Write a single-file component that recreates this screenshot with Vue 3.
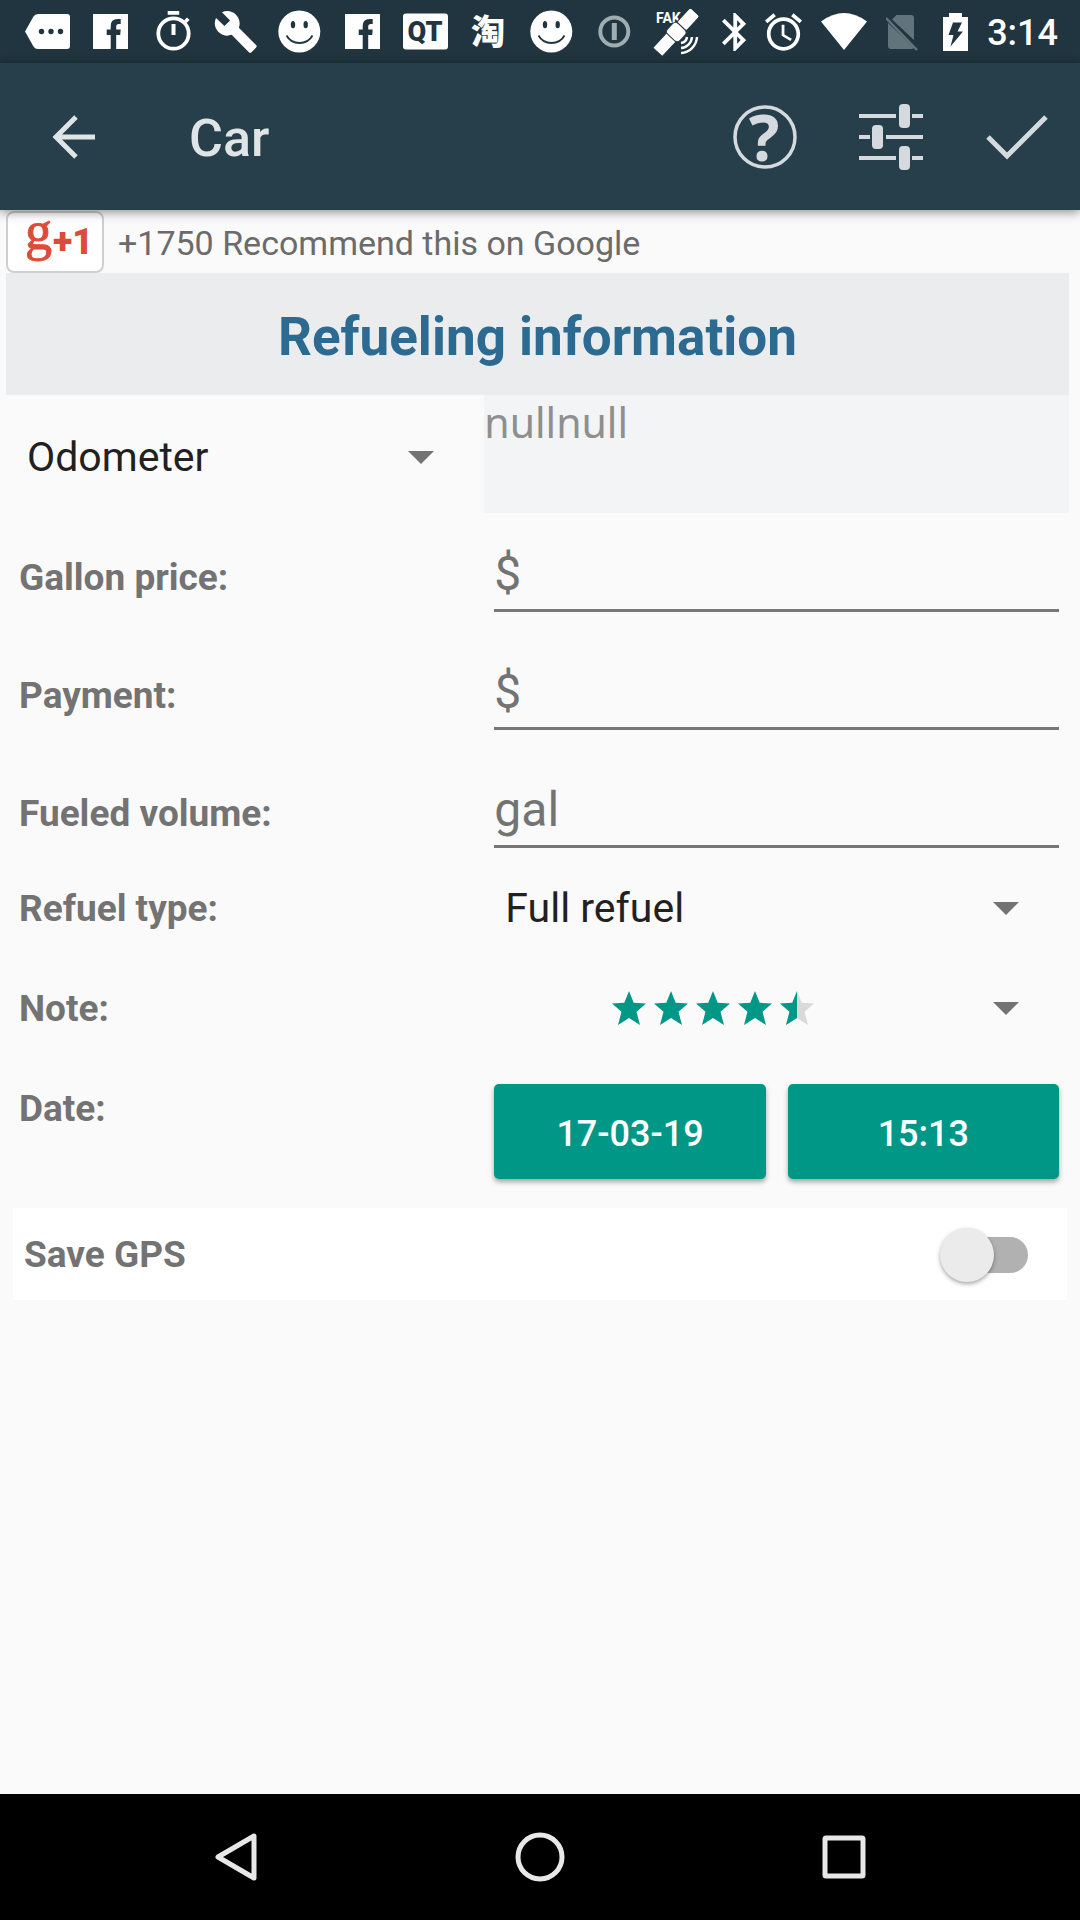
<script setup>
import { ref } from 'vue'

const notices = ['more', 'facebook', 'timer', 'wrench', 'smile', 'facebook', 'qt', 'tao', 'smile', 'info', 'satellite']

const fields = [
  { id: 'price', label: 'Gallon price:', hint: '$' },
  { id: 'payment', label: 'Payment:', hint: '$' },
  { id: 'volume', label: 'Fueled volume:', hint: 'gal' }
]

const values = ref({ price: '', payment: '', volume: '' })
const counter = ref('nullnull')
const counterType = ref('Odometer')
const refuelType = ref('Full refuel')
const saveGps = ref(false)
</script>

<template>
  <div class="screen">
    <div class="status">
      <div class="notices">
        <svg v-for="(kind, i) in notices" :key="i" class="notice" viewBox="0 0 63 63" aria-hidden="true">
          <g v-if="kind === 'more'">
            <path fill="#fff" d="M9 31.500 L17.500 16.500 Q19 14 22 14 H51 q3 0 3 3 V46 q0 3 -3 3 H22 q-3 0 -4.500 -2.500 Z" />
            <g class="ink"><circle cx="25.500" cy="31.500" r="2.700" /><circle cx="35" cy="31.500" r="2.700" /><circle cx="44.500" cy="31.500" r="2.700" /></g>
          </g>
          <g v-else-if="kind === 'facebook'">
            <path fill="#fff" d="M14 14h35v35H14z" />
            <path class="ink" d="M31.700 49V35h-4v-5.500h4v-3.500q0-7 7-7h3v5h-2q-2.500 0-2.500 2.500v3h4.500l-.5 5.500h-4v14z" />
          </g>
          <g v-else-if="kind === 'timer'">
            <circle cx="31.500" cy="33.500" r="15.200" fill="none" stroke="#fff" stroke-width="3.800" />
            <path fill="#fff" d="M25.700 11h11.500v3.800H25.700zM29.500 24h4v11h-4zM42 20.500l3-3 2.600 2.600-3 3z" />
          </g>
          <path v-else-if="kind === 'wrench'" fill="#fff" transform="translate(8 9) scale(1.9)" d="M22.700 19l-9.100-9.100c.9-2.300.4-5-1.500-6.900-2-2-5-2.400-7.400-1.300L9 6 6 9 1.600 4.700C.4 7.100.9 10.100 2.900 12.100c1.900 1.900 4.600 2.400 6.900 1.500l9.100 9.100c.4.4 1 .4 1.400 0l2.300-2.300c.5-.4.5-1.100.1-1.400z" />
          <g v-else-if="kind === 'smile'">
            <circle cx="31.300" cy="31.500" r="21" fill="#fff" />
            <g class="ink"><ellipse cx="25" cy="24.700" rx="2.200" ry="3.600" /><ellipse cx="37.700" cy="24.700" rx="2.200" ry="3.600" /></g>
            <path class="ink-line" d="M18.500 35.500 C24 45.500 39 45.500 44.500 35.500" stroke-width="1.800" />
          </g>
          <g v-else-if="kind === 'qt'">
            <rect x="9" y="13.500" width="45" height="36" rx="3" fill="#fff" />
            <text class="ink qt" x="31" y="41" text-anchor="middle">QT</text>
          </g>
          <text v-else-if="kind === 'tao'" class="tao" x="14" y="44">淘</text>
          <g v-else-if="kind === 'info'">
            <circle cx="31.300" cy="31.500" r="14" fill="none" stroke="#9facb2" stroke-width="4" />
            <path fill="#9facb2" d="M28.800 23h5v17h-5z" />
          </g>
          <g v-else>
            <text class="fake" x="10" y="23">FAK</text>
            <g transform="translate(31 32) rotate(-47)" fill="#fff" class="edge">
              <rect x="-28" y="-7" width="21" height="13" />
              <rect x="7" y="-7" width="20" height="13" rx="2" />
              <rect x="-8" y="-9" width="15" height="17" rx="4" />
            </g>
            <g fill="none" stroke="#fff" stroke-width="2.500">
              <path d="M41 37 A7 7 0 0 1 35 43M46 37 A12 12 0 0 1 35 48M51 37 A17 17 0 0 1 35 53" />
            </g>
          </g>
        </svg>
      </div>
      <div class="system">
        <svg width="24" height="38" viewBox="5 2 12.700 20" aria-hidden="true"><path fill="#fff" d="M17.710 7.710L12 2h-1v7.590L6.410 5 5 6.410 10.590 12 5 17.590 6.410 19 11 14.410V22h1l5.710-5.710-4.300-4.290 4.300-4.290zM13 5.830l1.880 1.880L13 9.590V5.830zm1.880 10.460L13 18.170v-3.760l1.880 1.880z" /></svg>
        <svg width="37" height="38" viewBox="2 1.860 20 20.140" aria-hidden="true"><path fill="#fff" d="M22 5.720l-4.600-3.860-1.290 1.530 4.600 3.860L22 5.720zM7.880 3.390L6.600 1.860 2 5.710l1.290 1.530 4.590-3.850zM12.500 8H11v6l4.750 2.850.75-1.230-4-2.370V8zM12 4c-4.970 0-9 4.030-9 9s4.020 9 9 9c4.970 0 9-4.030 9-9s-4.030-9-9-9zm0 16c-3.870 0-7-3.130-7-7s3.130-7 7-7 7 3.130 7 7-3.130 7-7 7z" /></svg>
        <svg width="46" height="38" viewBox="0 0 46 38" aria-hidden="true"><path fill="#fff" d="M0 8.500 Q23 -8.500 46 8.500 L23 37Z" /></svg>
        <svg width="38" height="38" viewBox="2 0 38 38" aria-hidden="true">
          <path fill="#61747b" d="M12.500 2H27q3 0 3 3V27L8 6.500ZM4 10 L30 34.500 Q29.500 36 27 36H7q-3 0-3-3Z" />
          <path stroke="#61747b" stroke-width="2.500" d="M2 5L33 37" />
        </svg>
        <svg width="25" height="38" viewBox="0 0 25 38" aria-hidden="true">
          <path fill="#fff" d="M6 0h13v4h6v34H0V4h6z" />
          <path class="ink" d="M10 9.500h9l-4.500 9H20L7.500 33.500 10.500 22H5.500z" />
        </svg>
        <span class="clock">3:14</span>
      </div>
    </div>

    <header class="appbar">
      <button class="back" aria-label="Back">
        <svg width="44" height="44" viewBox="0 0 44 44"><path d="M24 2 L4 22 L24 42 M4 22 H43" fill="none" stroke="#dfe4e6" stroke-width="5" /></svg>
      </button>
      <h1>Car</h1>
      <button class="action" aria-label="Help">
        <svg width="126" height="126" viewBox="0 0 126 126">
          <circle cx="63" cy="63" r="30" fill="none" stroke="#d4dadd" stroke-width="3.500" />
          <text class="help" x="62" y="87" text-anchor="middle">?</text>
        </svg>
      </button>
      <button class="action" aria-label="Settings">
        <svg width="64" height="66" viewBox="0 0 64 66" fill="#d4dadd">
          <path d="M0 10h37v4H0zM53 10h11v4H53zM0 31h11v4H0zM27 31h37v4H27zM0 52h37v4H0zM53 52h11v4H53z" />
          <rect x="40" y="0" width="11" height="24" rx="4" /><rect x="13" y="21" width="11" height="24" rx="4" /><rect x="40" y="42" width="11" height="24" rx="4" />
        </svg>
      </button>
      <button class="action" aria-label="Save">
        <svg width="62" height="46" viewBox="0 0 62 46"><path d="M2 23 L21 42 L60 3" fill="none" stroke="#d4dadd" stroke-width="5" /></svg>
      </button>
    </header>

    <main>
      <div class="plus">
        <button class="plus-button" aria-label="+1">
          <svg width="94" height="62" viewBox="0 0 94 62" fill="#dd4b39">
            <text class="g" x="17" y="38">g</text>
            <text class="one" x="45" y="43">+1</text>
          </svg>
        </button>
        <span>+1750 Recommend this on Google</span>
      </div>

      <h2>Refueling information</h2>

      <div class="row counter">
        <div class="drop">
          <select v-model="counterType" aria-label="Counter type"><option>Odometer</option></select>
          <svg class="arrow" viewBox="0 0 26 13"><path d="M0 0h26L13 13z" /></svg>
        </div>
        <input v-model="counter" class="reading" type="text" aria-label="Counter reading" />
      </div>

      <div v-for="f in fields" :key="f.id" class="row field">
        <label :for="f.id">{{ f.label }}</label>
        <input :id="f.id" v-model="values[f.id]" type="text" :placeholder="f.hint" />
      </div>

      <div class="row choice">
        <label for="refuel">Refuel type:</label>
        <div class="drop">
          <select id="refuel" v-model="refuelType"><option>Full refuel</option></select>
          <svg class="arrow" viewBox="0 0 26 13"><path d="M0 0h26L13 13z" /></svg>
        </div>
      </div>

      <div class="row choice">
        <label for="note">Note:</label>
        <button id="note" class="drop rating" aria-label="4.5 stars">
          <span class="stars">
            <svg v-for="n in 5" :key="n" width="34" height="34" viewBox="0 0 34 34">
              <path :fill="n < 5 ? '#009787' : '#d9d9d9'" d="M17 0 L21.700 11.800 L34 12.600 L24.500 20.800 L28 34 L17 27 L6 34 L9.500 20.800 L0 12.600 L12.300 11.800 Z" />
              <path v-if="n === 5" fill="#009787" d="M17 0 V27 L6 34 L9.500 20.800 L0 12.600 L12.300 11.800 Z" />
            </svg>
          </span>
          <svg class="arrow" viewBox="0 0 26 13"><path d="M0 0h26L13 13z" /></svg>
        </button>
      </div>

      <div class="row choice date">
        <label for="day">Date:</label>
        <div class="buttons">
          <button id="day">17-03-19</button>
          <button>15:13</button>
        </div>
      </div>

      <div class="gps">
        <label for="gps">Save GPS</label>
        <input id="gps" v-model="saveGps" type="checkbox" role="switch" />
      </div>
    </main>

    <nav>
      <button aria-label="Back"><svg width="44" height="50" viewBox="0 0 44 50"><path d="M40 4 V46 L4 25 Z" /></svg></button>
      <button aria-label="Home"><svg width="50" height="50" viewBox="0 0 50 50"><circle cx="25" cy="25" r="22" /></svg></button>
      <button aria-label="Recent apps"><svg width="44" height="44" viewBox="0 0 44 44"><rect x="3" y="3" width="38" height="38" rx="1" /></svg></button>
    </nav>
  </div>
</template>

<style>
body {
  margin: 0;
  background: #fafafa;
}
</style>

<style scoped>
* {
  box-sizing: border-box;
}
.screen {
  display: flex;
  flex-direction: column;
  min-height: 100vh;
  font-family: Roboto, "Noto Sans CJK SC", sans-serif;
  color: #737373;
  background: #fafafa;
}
svg {
  display: block;
  flex: none;
}
button,
input,
select {
  margin: 0;
  padding: 0;
  border: 0;
  border-radius: 0;
  outline: 0;
  background: none;
  font-family: inherit;
  color: inherit;
}
.status {
  display: flex;
  justify-content: space-between;
  height: 63px;
  padding: 0 22px 0 16px;
  background: #20353f;
}
.notices,
.system {
  display: flex;
  align-items: center;
}
.notice {
  width: 63px;
  height: 63px;
}
.system {
  gap: 19px;
}
.ink {
  fill: #20353f;
}
.ink-line {
  fill: none;
  stroke: #20353f;
}
.qt {
  font-size: 27px;
  font-weight: 900;
}
.tao {
  font: 900 34px "Noto Sans CJK SC", sans-serif;
  fill: #fff;
}
.fake {
  font-size: 14px;
  font-weight: 700;
  fill: #fff;
}
.edge {
  stroke: #20353f;
  stroke-width: 1px;
}
.clock {
  padding-top: 2px;
  font-size: 36px;
  font-weight: 500;
  line-height: 44px;
  color: #fff;
}
.appbar {
  display: flex;
  align-items: center;
  height: 147px;
  background: #273f4b;
  box-shadow: 0 2px 10px rgba(0, 0, 0, 0.45);
  z-index: 1;
}
.appbar button {
  display: flex;
  align-items: center;
  justify-content: center;
  height: 126px;
}
.back {
  width: 148px;
}
h1 {
  flex: 1;
  margin: 0;
  padding: 4px 0 0 41px;
  font-size: 52px;
  font-weight: 500;
  line-height: 64px;
  color: #dfe4e6;
}
.action {
  width: 126px;
}
.help {
  font: 700 64px "Noto Sans", sans-serif;
}
.action svg {
  fill: #d4dadd;
}
main {
  flex: 1;
  padding: 0 11px 0 6px;
}
.plus {
  display: flex;
  align-items: center;
  gap: 14px;
  height: 63px;
  font-size: 34px;
  line-height: 44px;
  color: #6b6b6b;
}
.plus span {
  padding-top: 2px;
}
.plus-button {
  display: flex;
  align-items: center;
  justify-content: center;
  width: 98px;
  height: 62px;
  border: 2px solid #cfcfcf;
  border-radius: 8px;
  background: #fff;
}
.g {
  font: 54px "Liberation Serif", serif;
  stroke: #dd4b39;
  stroke-width: 1px;
}
.one {
  font-size: 36px;
  font-weight: 900;
}
h2 {
  margin: 0;
  padding-top: 6px;
  font-size: 53px;
  font-weight: 700;
  line-height: 116px;
  text-align: center;
  color: #2c6a92;
  background: #eaecee;
}
.row {
  display: grid;
  grid-template-columns: minmax(0, 9fr) minmax(0, 11fr);
  align-items: start;
}
label {
  font-size: 37px;
  font-weight: 700;
  line-height: 44px;
}
.row label {
  padding-left: 13px;
}
.drop {
  display: grid;
  align-items: center;
  height: 82px;
}
.drop > * {
  grid-area: 1 / 1;
}
.drop select {
  width: 100%;
  height: 100%;
  padding-left: 21px;
  appearance: none;
  font-size: 41px;
  color: #212121;
}
.arrow {
  justify-self: end;
  width: 26px;
  height: 13px;
  margin-right: 50px;
  fill: #737373;
  pointer-events: none;
}
.counter .drop {
  height: 118px;
  padding-top: 6px;
}
.reading {
  width: 100%;
  height: 118px;
  padding-bottom: 64px;
  font: 41px "Noto Sans", sans-serif;
  color: #8f8f8f;
  background: #f2f4f6;
}
.field {
  height: 118px;
}
.field label {
  padding-top: 43px;
}
.field input {
  height: 82px;
  margin: 17px 10px 0;
  padding-top: 8px;
  border-bottom: 3px solid #777;
  font-size: 48px;
}
.field input::placeholder {
  color: #737373;
  opacity: 1;
}
.choice {
  height: 100px;
}
.choice label {
  padding-top: 20px;
}
.rating {
  width: 100%;
}
.stars {
  display: flex;
  gap: 8px;
  padding-left: 128px;
}
.date {
  height: 141px;
}
.buttons {
  display: flex;
  gap: 22px;
  padding: 17px 10px 0;
}
.buttons button {
  flex: 1;
  height: 95px;
  padding-top: 4px;
  border-radius: 5px;
  background: #009787;
  box-shadow: 0 3px 5px rgba(0, 0, 0, 0.35);
  font-size: 36px;
  font-weight: 500;
  color: #fff;
}
.gps {
  display: flex;
  align-items: center;
  justify-content: space-between;
  height: 92px;
  margin: 0 2px 0 7px;
  padding: 2px 39px 0 11px;
  background: #fff;
}
.gps input {
  display: grid;
  align-items: center;
  width: 88px;
  height: 54px;
  appearance: none;
}
.gps input::before,
.gps input::after {
  content: "";
  grid-area: 1 / 1;
}
.gps input::before {
  height: 36px;
  margin-left: 18px;
  border-radius: 18px;
  background: #b1b1b1;
}
.gps input::after {
  width: 54px;
  height: 54px;
  border-radius: 50%;
  background: #ebebeb;
  box-shadow: 0 2px 4px rgba(0, 0, 0, 0.35);
}
.gps input:checked::after {
  justify-self: end;
  background: #009787;
}
nav {
  display: flex;
  height: 126px;
  padding: 0 84px;
  background: #000;
}
nav button {
  display: flex;
  flex: 1;
  align-items: center;
  justify-content: center;
}
nav svg {
  fill: none;
  stroke: #e8e8e8;
  stroke-width: 5px;
  stroke-linejoin: round;
}
</style>
